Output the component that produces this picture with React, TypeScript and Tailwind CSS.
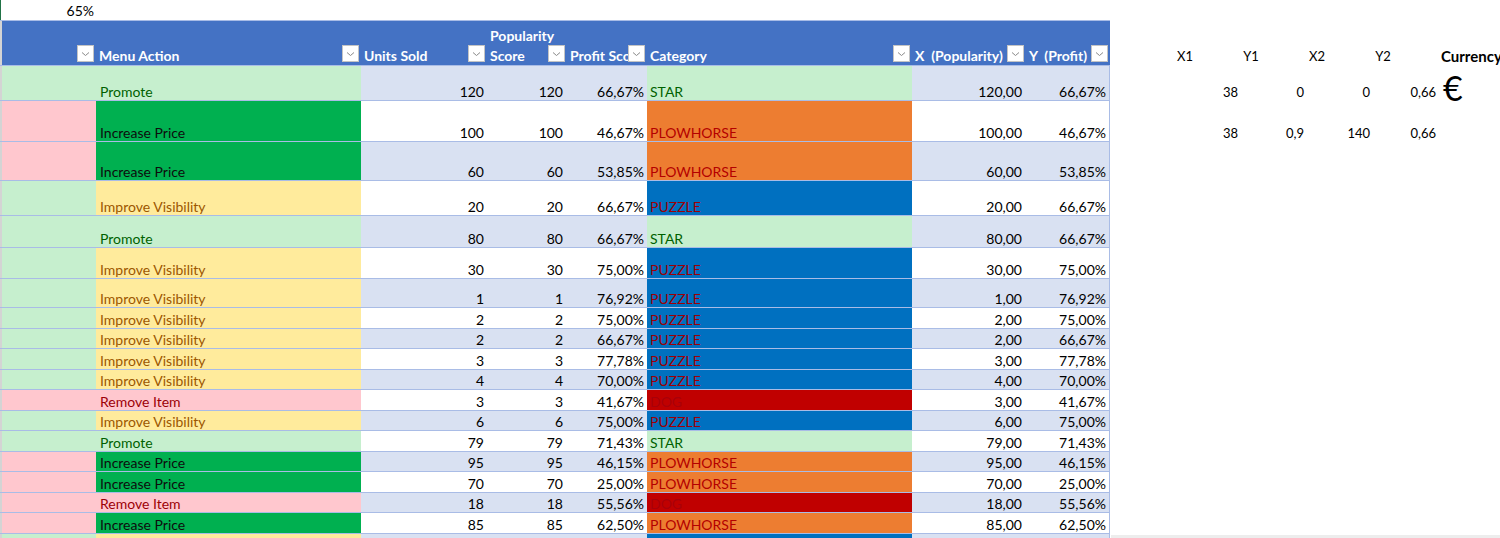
import React from "react";

type Row = {
  h: number;
  a: "g" | "p";
  action: "Promote" | "Increase Price" | "Improve Visibility" | "Remove Item";
  units: string;
  pop: string;
  profit: string;
  cat: "STAR" | "PLOWHORSE" | "PUZZLE" | "DOG";
  x: string;
  y: string;
  hidden?: boolean;
};

const rows: Row[] = [
  { h: 35, a: "g", action: "Promote", units: "120", pop: "120", profit: "66,67%", cat: "STAR", x: "120,00", y: "66,67%" },
  { h: 41, a: "p", action: "Increase Price", units: "100", pop: "100", profit: "46,67%", cat: "PLOWHORSE", x: "100,00", y: "46,67%" },
  { h: 39, a: "p", action: "Increase Price", units: "60", pop: "60", profit: "53,85%", cat: "PLOWHORSE", x: "60,00", y: "53,85%" },
  { h: 35, a: "g", action: "Improve Visibility", units: "20", pop: "20", profit: "66,67%", cat: "PUZZLE", x: "20,00", y: "66,67%" },
  { h: 32, a: "g", action: "Promote", units: "80", pop: "80", profit: "66,67%", cat: "STAR", x: "80,00", y: "66,67%" },
  { h: 31, a: "g", action: "Improve Visibility", units: "30", pop: "30", profit: "75,00%", cat: "PUZZLE", x: "30,00", y: "75,00%" },
  { h: 29, a: "g", action: "Improve Visibility", units: "1", pop: "1", profit: "76,92%", cat: "PUZZLE", x: "1,00", y: "76,92%" },
  { h: 21, a: "g", action: "Improve Visibility", units: "2", pop: "2", profit: "75,00%", cat: "PUZZLE", x: "2,00", y: "75,00%" },
  { h: 20, a: "g", action: "Improve Visibility", units: "2", pop: "2", profit: "66,67%", cat: "PUZZLE", x: "2,00", y: "66,67%" },
  { h: 21, a: "g", action: "Improve Visibility", units: "3", pop: "3", profit: "77,78%", cat: "PUZZLE", x: "3,00", y: "77,78%" },
  { h: 20, a: "g", action: "Improve Visibility", units: "4", pop: "4", profit: "70,00%", cat: "PUZZLE", x: "4,00", y: "70,00%" },
  { h: 21, a: "p", action: "Remove Item", units: "3", pop: "3", profit: "41,67%", cat: "DOG", x: "3,00", y: "41,67%" },
  { h: 20, a: "g", action: "Improve Visibility", units: "6", pop: "6", profit: "75,00%", cat: "PUZZLE", x: "6,00", y: "75,00%" },
  { h: 21, a: "g", action: "Promote", units: "79", pop: "79", profit: "71,43%", cat: "STAR", x: "79,00", y: "71,43%" },
  { h: 20, a: "p", action: "Increase Price", units: "95", pop: "95", profit: "46,15%", cat: "PLOWHORSE", x: "95,00", y: "46,15%" },
  { h: 21, a: "p", action: "Increase Price", units: "70", pop: "70", profit: "25,00%", cat: "PLOWHORSE", x: "70,00", y: "25,00%" },
  { h: 20, a: "p", action: "Remove Item", units: "18", pop: "18", profit: "55,56%", cat: "DOG", x: "18,00", y: "55,56%" },
  { h: 21, a: "p", action: "Increase Price", units: "85", pop: "85", profit: "62,50%", cat: "PLOWHORSE", x: "85,00", y: "62,50%" },
  { h: 21, a: "g", action: "Improve Visibility", units: "5", pop: "5", profit: "75,00%", cat: "PUZZLE", x: "5,00", y: "75,00%", hidden: true },
];

const actionStyle: Record<Row["action"], string> = {
  Promote: "bg-[#C6EFCE] text-[#006100]",
  "Increase Price": "bg-[#00B050] text-[#0d0d0d]",
  "Improve Visibility": "bg-[#FFEB9C] text-[#9C5700]",
  "Remove Item": "bg-[#FFC7CE] text-[#9C0006]",
};

const catStyle: Record<Row["cat"], string> = {
  STAR: "bg-[#C6EFCE] text-[#006100]",
  PLOWHORSE: "bg-[#ED7D31] text-[#B40000]",
  PUZZLE: "bg-[#0070C0] text-[#9C0006]",
  DOG: "bg-[#C00000] text-[#A8000A]",
};

function Filter() {
  return (
    <div className="w-[17px] h-[17px] mb-[3px] shrink-0 bg-white border border-[#C4C4C4] flex items-center justify-center">
      <svg width="9" height="6" viewBox="0 0 9 6">
        <path d="M1 1.5 L4.5 4.5 L8 1.5" fill="none" stroke="#8A8A8A" strokeWidth="1" />
      </svg>
    </div>
  );
}

function HeadCell({ w, children, clip = true }: { w: string; children?: React.ReactNode; clip?: boolean }) {
  return (
    <div className={`${w} shrink-0 flex items-end h-full pr-[2px]`}>
      <div
        className={`flex-1 min-w-0 whitespace-nowrap font-bold text-white text-[14px] leading-[19px] pl-[3px] ${
          clip ? "overflow-hidden" : "overflow-visible"
        }`}
      >
        {children}
      </div>
      <Filter />
    </div>
  );
}

const cellText = "pb-0 leading-[17px]";

export default function App() {
  return (
    <div
      className="w-[1500px] h-[538px] overflow-hidden bg-white relative text-[14px] text-black"
      style={{ fontFamily: "Lato, 'Open Sans', 'Liberation Sans', sans-serif" }}
    >
      <div className="flex">
        {/* Table */}
        <div className="w-[1110px] shrink-0 flex flex-col">
          {/* top row */}
          <div className="h-[21px] flex border-b border-[#A9BCE6]">
            <div className="w-[1px] bg-[#217346]" />
            <div className="w-[1px]" />
            <div className="w-[94px] text-right pr-[2px] leading-[21px]">65%</div>
          </div>
          {/* header */}
          <div className="h-[45px] flex bg-[#4472C4] border-b border-[#A9BCE6]">
            <div className="w-[2px] h-full bg-[#D4D4D4]" />
            <HeadCell w="w-[94px]" />
            <HeadCell w="w-[265px]">Menu Action</HeadCell>
            <HeadCell w="w-[126px]">Units Sold</HeadCell>
            <HeadCell w="w-[80px]" clip={false}>
              <div className="leading-[20px]">Popularity</div>
              <div>Score</div>
            </HeadCell>
            <HeadCell w="w-[80px]">Profit Score</HeadCell>
            <HeadCell w="w-[265px]">Category</HeadCell>
            <HeadCell w="w-[114px]">X&nbsp; (Popularity)</HeadCell>
            <HeadCell w="w-[84px]">Y&nbsp; (Profit)</HeadCell>
          </div>
          {/* rows */}
          {rows.map((r, i) => {
            const band = i % 2 === 0 ? "bg-[#D9E1F2]" : "bg-white";
            const t = (s: string) => (r.hidden ? "" : s);
            return (
              <div key={i} className="flex border-b border-[#A9BCE6] shrink-0" style={{ height: r.h }}>
                <div className="w-[2px] bg-[#D4D4D4]" />
                <div className={`w-[94px] ${r.a === "g" ? "bg-[#C6EFCE]" : "bg-[#FFC7CE]"}`} />
                <div className={`w-[265px] flex items-end pl-[4px] ${cellText} ${actionStyle[r.action]}`}>
                  {t(r.action)}
                </div>
                <div className={`w-[126px] flex items-end justify-end pr-[3px] ${cellText} ${band}`}>{t(r.units)}</div>
                <div className={`w-[80px] flex items-end justify-end pr-[4px] ${cellText} ${band}`}>{t(r.pop)}</div>
                <div className={`w-[80px] flex items-end justify-end pr-[3px] ${cellText} ${band}`}>{t(r.profit)}</div>
                <div className={`w-[265px] flex items-end pl-[3px] ${cellText} ${catStyle[r.cat]}`}>{t(r.cat)}</div>
                <div className={`w-[114px] flex items-end justify-end pr-[4px] ${cellText} ${band}`}>{t(r.x)}</div>
                <div
                  className={`w-[84px] flex items-end justify-end pr-[3px] ${cellText} border-r border-[#A9BCE6] ${band}`}
                >
                  {t(r.y)}
                </div>
              </div>
            );
          })}
        </div>
        {/* Right panel */}
        <div className="flex-1 flex flex-col">
          <div className="h-[21px]" />
          <div className="h-[45px] flex items-end">
            <div className="w-[42px]" />
            <div className="w-[66px] text-center text-[13px] leading-[19px]">X1</div>
            <div className="w-[66px] text-center text-[13px] leading-[19px]">Y1</div>
            <div className="w-[66px] text-center text-[13px] leading-[19px]">X2</div>
            <div className="w-[66px] text-center text-[13px] leading-[19px]">Y2</div>
            <div className="pl-[25px] font-bold text-[15px] leading-[19px] whitespace-nowrap">Currency</div>
          </div>
          <div className="h-[35px] flex items-end">
            <div className="w-[64px]" />
            <div className="w-[66px] text-right pr-[2px] text-[13px] leading-[17px]">38</div>
            <div className="w-[66px] text-right pr-[2px] text-[13px] leading-[17px]">0</div>
            <div className="w-[66px] text-right pr-[2px] text-[13px] leading-[17px]">0</div>
            <div className="w-[66px] text-right pr-[2px] text-[13px] leading-[17px]">0,66</div>
            <div className="pl-[5px] text-[34px] leading-[27px]">€</div>
          </div>
          <div className="h-[41px] flex items-end">
            <div className="w-[64px]" />
            <div className="w-[66px] text-right pr-[2px] text-[13px] leading-[17px]">38</div>
            <div className="w-[66px] text-right pr-[2px] text-[13px] leading-[17px]">0,9</div>
            <div className="w-[66px] text-right pr-[2px] text-[13px] leading-[17px]">140</div>
            <div className="w-[66px] text-right pr-[2px] text-[13px] leading-[17px]">0,66</div>
          </div>
        </div>
      </div>
      <div className="absolute left-[1111px] right-0 bottom-0 h-[3px] bg-[#EDEDED]" />
    </div>
  );
}
